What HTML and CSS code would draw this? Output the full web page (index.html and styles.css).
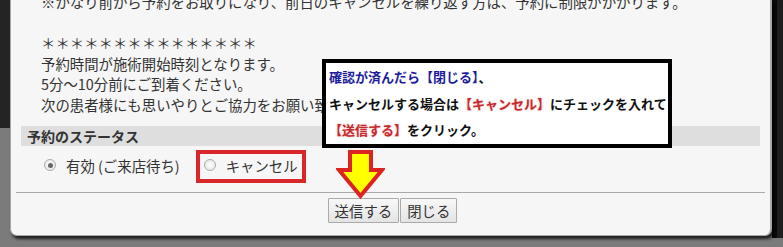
FILE: index.html
```html
<!DOCTYPE html>
<html lang="ja">
<head>
<meta charset="utf-8">
<link rel="stylesheet" href="styles.css">
</head>
<body>
<div class="stage">
  <div class="side-left"><div class="side-left-top"></div></div>
  <div class="dialog">
    <div class="notes">
      <p>※かなり前から予約をお取りになり、前日のキャンセルを繰り返す方は、予約に制限がかかります。</p>
      <p>&nbsp;</p>
      <p class="stars">＊＊＊＊＊＊＊＊＊＊＊＊＊＊＊</p>
      <p>予約時間が施術開始時刻となります。</p>
      <p>5分～10分前にご到着ください。</p>
      <p>次の患者様にも思いやりとご協力をお願い致します。</p>
    </div>
    <div class="status-head">予約のステータス</div>
    <div class="status-row">
      <label class="opt"><span class="radio checked"></span>有効 (ご来店待ち)</label>
      <label class="opt"><span class="radio"></span>キャンセル</label>
    </div>
    <div class="footer">
      <button class="btn">送信する</button><button class="btn">閉じる</button>
    </div>

    <div class="mark-box"></div>
    <svg class="arrow" width="49" height="50" viewBox="0 0 49 50">
      <polygon points="14,3 35,3 35,21 46,21 24.5,47 3,21 14,21" fill="#ffff00" stroke="#dd2222" stroke-width="4" stroke-linejoin="miter"/>
    </svg>
    <div class="callout">
      <p><span class="blue">確認が済んだら【閉じる】</span>、</p>
      <p>キャンセルする場合は<span class="red">【キャンセル】</span>にチェックを入れて</p>
      <p><span class="red">【送信する】</span>をクリック。</p>
    </div>
  </div>
  <div class="side-right"></div>
</div>
</body>
</html>
```

FILE: styles.css
```css
html, body {
  margin: 0;
  padding: 0;
}
body {
  width: 783px;
  height: 247px;
  overflow: hidden;
  background: #7b7b7b;
  font-family: "Noto Sans CJK JP", "Noto Sans", sans-serif;
}
.stage {
  display: flex;
  height: 247px;
}
.side-left {
  width: 10px;
  flex: none;
}
.side-left-top {
  height: 128px;
  background: #242424;
}
.side-right {
  width: 12px;
  flex: none;
  height: 238px;
  background: linear-gradient(to right, #0a0a0a 0, #0a0a0a 5px, #1e1e1e 5px);
}
.dialog {
  position: relative;
  width: 759px;
  height: 235px;
  flex: none;
  background: #f6f6f6;
  border: 1px solid #a8a8a8;
  border-top: none;
  border-right-width: 2px;
  border-radius: 0 0 7px 7px;
  box-shadow: 2px 3px 3px rgba(0, 0, 0, 0.75);
  overflow: hidden;
}
.notes {
  margin-top: -8px;
  padding-left: 30px;
  font-size: 14.4px;
  line-height: 20.5px;
  color: #333;
}
.notes p {
  margin: 0;
  white-space: nowrap;
}
.status-head {
  margin: 11px 10px 0 10px;
  height: 20px;
  line-height: 20px;
  background: #dedede;
  padding-left: 6px;
  font-size: 14px;
  font-weight: bold;
  color: #333;
}
.status-row {
  display: flex;
  align-items: center;
  gap: 24px;
  height: 20px;
  margin-top: 9px;
  padding-left: 33px;
  font-size: 14.4px;
  color: #333;
}
.opt {
  display: flex;
  align-items: center;
  gap: 10px;
}
.radio {
  width: 12px;
  height: 12px;
  border-radius: 50%;
  border: 1px solid #ababab;
  background: radial-gradient(circle, #ffffff 0, #e2e2e2 100%);
  box-sizing: border-box;
  position: relative;
}
.radio.checked::after {
  content: "";
  position: absolute;
  left: 2.5px;
  top: 2.5px;
  width: 5px;
  height: 5px;
  border-radius: 50%;
  background: #666;
}
.footer {
  margin: 17px 5px 0 5px;
  border-top: 1px solid #a9a9a9;
  padding-top: 5px;
  display: flex;
  justify-content: center;
  padding-left: 4px;
}
.btn {
  font-family: "Noto Sans CJK JP", "Noto Sans", sans-serif;
  font-size: 14.4px;
  color: #333;
  height: 25px;
  line-height: 21px;
  padding: 0 6px;
  background: linear-gradient(#f8f8f8, #e4e4e4);
  border: 1px solid #aaa;
  border-radius: 1px;
  margin: 0;
}
.btn + .btn {
  margin-left: 1px;
}
.mark-box {
  position: absolute;
  left: 185px;
  top: 150px;
  width: 102px;
  height: 25px;
  border: 4px solid #d8262b;
}
.arrow {
  position: absolute;
  left: 325px;
  top: 149px;
}
.callout {
  position: absolute;
  left: 311px;
  top: 59px;
  width: 339px;
  height: 81px;
  border: 4px solid #000;
  background: #fff;
  padding: 0 0 0 3px;
  font-size: 13px;
  font-weight: bold;
  color: #111;
}
.callout p {
  margin: 0;
  height: 26.5px;
  line-height: 27px;
  white-space: nowrap;
}
.blue {
  color: #1c1c9c;
}
.red {
  color: #c42a2e;
  text-shadow: 0 0 2px rgba(230, 120, 120, 0.6);
}
```
